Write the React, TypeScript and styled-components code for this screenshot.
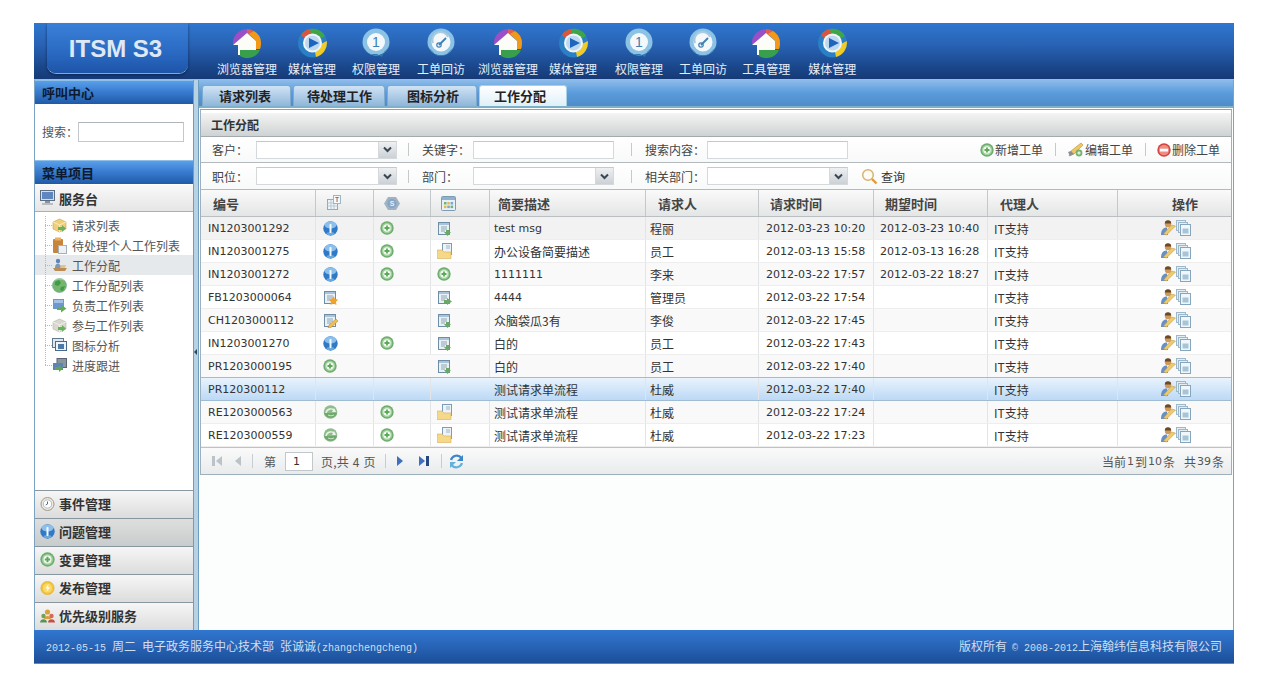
import React from "react";
import styled, { createGlobalStyle } from "styled-components";

const Global = createGlobalStyle`
  html, body { margin: 0; padding: 0; background: #fff; }
  body { font-family: "Noto Sans CJK SC", "Noto Sans", sans-serif; font-size: 12px; color: #333; }
`;

const Page = styled.div`
  width: 1280px; height: 700px; padding: 23px 0 0 34px; box-sizing: border-box; overflow: hidden;
`;
const Shell = styled.div`
  width: 1200px; height: 641px; display: flex; flex-direction: column;
`;
const Header = styled.header`
  height: 57px; flex: none; display: flex; align-items: flex-start; box-sizing: border-box;
  background: linear-gradient(#2f77d0 0%, #2862b3 40%, #1a4689 80%, #163a76 100%);
  border-bottom: 1px solid #8fc0e6;
`;
const Logo = styled.div`
  width: 141px; height: 50px; margin-left: 13px; flex: none; box-sizing: border-box;
  display: flex; align-items: center; justify-content: center; padding: 1px 4px 0 0;
  font: bold 24px "Liberation Sans", Arial, sans-serif; color: #dfe9f5;
  background: linear-gradient(#3a80d8 0%, #2a69c2 60%, #1d55a8 100%);
  border-radius: 0 0 9px 9px;
  box-shadow: 0 1px 0 #7ea9da, 0 2px 3px rgba(5, 25, 70, .7);
`;
const Nav = styled.nav`
  display: flex; margin-left: 29px; align-items: flex-start;
`;
const NavItem = styled.a<{ $gap: number }>`
  display: flex; flex-direction: column; align-items: center; margin-right: ${p => p.$gap}px;
  color: #e6eff9; font-size: 12px; line-height: 14px; padding-top: 5px;
  svg { display: block; margin-bottom: 4px; }
`;
const Body = styled.div`
  flex: 1; min-height: 0; display: flex; background: #fcfefe;
  border-left: 1px solid #7ca4c2; border-right: 1px solid #7ca4c2; box-sizing: border-box;
`;
const Sidebar = styled.aside`
  width: 158px; flex: none; display: flex; flex-direction: column; background: #fff; box-sizing: border-box;
`;
const PaneHead = styled.div`
  height: 24px; flex: none; padding: 0 0 1px 7px; display: flex; align-items: center; box-sizing: border-box;
  font-weight: 700; color: #0b1a30; font-size: 13px;
  background: linear-gradient(#5a9fec 0%, #3a7dd0 45%, #1f5aa8 100%);
  border-top: 1px solid #8fc0e6;
`;
const SearchBox = styled.div`
  height: 56px; flex: none; display: flex; align-items: center; padding: 0 0 1px 7px; color: #555; box-sizing: border-box;
`;
const SearchInput = styled.div`
  width: 106px; height: 20px; box-sizing: border-box;
  border: 1px solid #c4c8cc; border-top-color: #aeb4b8; background: #fff;
`;
const GroupHead = styled.div`
  height: 28px; flex: none; display: flex; align-items: center; gap: 4px; padding-left: 5px; box-sizing: border-box;
  font-weight: 700; font-size: 13px; color: #333;
  background: linear-gradient(#f8f8f8, #e6e6e6);
  border-bottom: 1px solid #a7b0b6; border-top: 1px solid #fff;
`;
const Tree = styled.ul`
  flex: 1; margin: 0; padding: 3px 0 0; list-style: none;
`;
const TreeRow = styled.li<{ $active?: boolean; $last?: boolean }>`
  height: 20px; display: flex; align-items: center; color: #555; font-size: 12px; padding-left: 17px;
  gap: 5px; box-sizing: border-box;
  background-color: ${p => (p.$active ? "#e6e9ec" : "transparent")};
  background-image: repeating-linear-gradient(0deg, #b8b8b8 0 1px, transparent 1px 2px),
    repeating-linear-gradient(90deg, #b8b8b8 0 1px, transparent 1px 2px);
  background-repeat: no-repeat;
  background-size: 1px ${p => (p.$last ? "10px" : "100%")}, 7px 1px;
  background-position: 10px 0, 10px 10px;
  svg { flex: none; width: 15px; }
`;
const Accordion = styled.div<{ $active?: boolean }>`
  height: 28px; flex: none; display: flex; align-items: center; gap: 4px; padding: 0 0 2px 5px; box-sizing: border-box;
  font-weight: 700; font-size: 13px; color: #333;
  border-top: 1px solid #87969f;
  background: ${p => (p.$active ? "linear-gradient(#dedede, #c9cccc)" : "linear-gradient(#f6f6f6, #dcdcdc)")};
  svg { flex: none; width: 15px; }
`;
const Splitter = styled.div`
  width: 6px; flex: none; display: flex; align-items: center; box-sizing: border-box; padding-bottom: 6px;
  background: #b7d2e4; border-left: 1px solid #6f9dbd; border-right: 1px solid #6f9dbd;
  &::before { content: ""; border: 3px solid transparent; border-right-color: #345; border-left: 0; }
`;
const Main = styled.main`
  flex: 1; min-width: 0; display: flex; flex-direction: column; box-sizing: border-box;
`;
const TabBar = styled.div`
  height: 28px; flex: none; display: flex; align-items: flex-end; gap: 2px; padding-left: 3px; box-sizing: border-box;
  background: linear-gradient(#8dbcea 0%, #5a9bdc 50%, #4f8cc8 100%);
  border-bottom: 2px solid #7fb0c9;
`;
const Tab = styled.div<{ $w: number; $pad: number; $active?: boolean }>`
  width: ${p => p.$w}px; height: 21px; display: flex; align-items: center; box-sizing: border-box;
  font-weight: 700; font-size: 13px; color: #222; padding: 0 0 2px ${p => p.$pad - 1}px;
  border-radius: 3px 3px 0 0;
  border: 1px solid ${p => (p.$active ? "#a9d0e4" : "#7eaad0")}; border-bottom: 0;
  background: ${p => (p.$active ? "linear-gradient(#ffffff, #dff0f8)" : "linear-gradient(#d0e3f4, #8fb6da)")};
`;
const Panel = styled.section`
  margin: 1px 1px 0 1px; border: 1px solid #9db0bb; border-top-color: #8aa3ac; display: flex; flex-direction: column; background: #fff;
`;
const PanelTitle = styled.div`
  height: 27px; flex: none; display: flex; align-items: center; padding: 0 0 1px 10px; box-sizing: border-box;
  border-top: 3px solid #fff; font-weight: 700; font-size: 12px; color: #333;
  background: linear-gradient(#f4f4f4, #cfd2d3); background-clip: padding-box;
  border-bottom: 1px solid #a3abae;
`;
const Toolbar = styled.div<{ $h: number }>`
  height: ${p => p.$h}px; flex: none; display: flex; align-items: center; padding: 0 11px; box-sizing: border-box;
  border-bottom: 1px solid #b3b9bc; color: #444; font-size: 12px;
  background: linear-gradient(#ffffff, #f8f9f9);
`;
const FieldLabel = styled.span<{ $w: number }>`
  width: ${p => p.$w}px; flex: none;
`;
const Input = styled.div`
  width: 141px; height: 18px; flex: none; display: flex; justify-content: flex-end; box-sizing: border-box;
  border: 1px solid #d6d9db; border-top-color: #c5c9cc; background: #fff;
`;
const ComboButton = styled.span`
  width: 17px; display: flex; align-items: center; justify-content: center;
  background: linear-gradient(#eef0f2, #ccd1d6); border-left: 1px solid #d6d9db;
`;
const Sep = styled.i<{ $l: number; $r: number }>`
  width: 1px; height: 13px; flex: none; background: #c5c9cc; margin: 0 ${p => p.$r}px 0 ${p => p.$l}px;
`;
const Actions = styled.div`
  margin-left: auto; display: flex; align-items: center; color: #444;
`;
const Action = styled.span`
  display: flex; align-items: center; gap: 1px;
`;
const QueryBtn = styled.span`
  display: flex; align-items: center; gap: 3px; margin-left: 13px; color: #333;
`;
const Grid = styled.div`
  display: grid; grid-template-columns: 115px 58px 57px 59px 156px 113px 115px 114px 130px 115px;
`;
const HeadRow = styled(Grid)`
  height: 27px; box-sizing: border-box; background: linear-gradient(#fafafa, #e4e5e5); border-bottom: 1px solid #b9bfc2;
`;
const HeadCell = styled.div<{ $pad?: number }>`
  display: flex; align-items: center; box-sizing: border-box; font-weight: 700; font-size: 13px; color: #444;
  padding-left: ${p => p.$pad ?? 12}px;
  border-right: 1px solid #c3c8ca;
  &:last-child { border-right: 0; }
`;
const Row = styled(Grid)<{ $tone: "first" | "odd" | "even" | "selected" }>`
  height: 23px; box-sizing: border-box; border-bottom: 1px solid ${p => (p.$tone === "selected" ? "#9fbcd2" : "#eeeeee")};
  background: ${p =>
    p.$tone === "first" ? "#f2f2f2" :
    p.$tone === "even" ? "#f9f9f9" :
    p.$tone === "selected" ? "linear-gradient(#e9f3fc, #bcd9f6)" : "#ffffff"};
  ${p => p.$tone === "selected" ? "margin-top: -1px; height: 24px; border-top: 1px solid #9fbcd2;" : ""}
`;
const Cell = styled.div<{ $pad?: number; $center?: boolean; $noline?: boolean; $latin?: boolean }>`
  display: flex; align-items: center; box-sizing: border-box; overflow: hidden; white-space: nowrap;
  justify-content: ${p => (p.$center ? "center" : "flex-start")};
  padding-left: ${p => (p.$center ? 0 : p.$pad ?? 7)}px; color: #333;
  font-size: ${p => (p.$latin ? "11px" : "12px")};
  font-family: ${p => (p.$latin ? '"DejaVu Sans", sans-serif' : 'inherit')};
  border-right: 1px solid ${p => (p.$noline ? "transparent" : "#e2e4e5")};
  &:last-child { border-right: 0; }
`;
const Pager = styled.div`
  height: 27px; flex: none; display: flex; align-items: center; padding: 0 7px 0 10px; box-sizing: border-box;
  color: #555; font-size: 12px; background: linear-gradient(#fafafa, #e9ebec);
  border-top: 1px solid #bcc2c5;
`;
const PagerSep = styled.i<{ $l: number; $r: number }>`
  width: 1px; height: 14px; background: #c9cdd0; flex: none; margin: 0 ${p => p.$r}px 0 ${p => p.$l}px;
`;
const PageInput = styled.span`
  width: 28px; height: 19px; margin: 0 8px 0 9px; display: flex; align-items: center; padding-left: 7px; box-sizing: border-box;
  border: 1px solid #c2c7ca; background: #fff; color: #333; font: 11px "DejaVu Sans", sans-serif;
`;
const PageTotal = styled.span` width: 55px; flex: none; word-spacing: 1px; letter-spacing: .2px; white-space: nowrap; `;
const PagerGap = styled.span<{ $w: number }>` width: ${p => p.$w}px; flex: none; `;
const PageInfo = styled.span` margin-left: auto; display: flex; align-items: center; `;
const Digits = styled.span` font: 11px "DejaVu Sans", sans-serif; margin: 0 1px; `;
const Num = styled.span`
  font: 10px "Liberation Mono", monospace;
`;
const Footer = styled.footer`
  height: 34px; flex: none; display: flex; align-items: center; justify-content: space-between; padding: 0 12px 2px 12px; box-sizing: border-box;
  color: #cfdff0; font-size: 12px;
  background: linear-gradient(#2f77d0 0%, #2863b6 50%, #1b4f98 100%);
  border-bottom: 1px solid #5f8ab5;
`;
const Space = styled.span<{ $w?: number }>` display: inline-block; width: ${p => p.$w ?? 6}px; `;

type P = { s?: number };
const Pinwheel = () => (
  <svg width="30" height="30" viewBox="0 0 30 30">
    <path d="M15 1 A14 14 0 0 0 1 16 H5 L15 6Z" fill="#9a4fc6" />
    <path d="M15 1 A14 14 0 0 1 22 3 L18 8 L15 5Z" fill="#dc5f57" />
    <path d="M22 3 A14 14 0 0 1 29 16 A14 14 0 0 1 28 21 H24 V13 L17 6Z" fill="#f29a18" />
    <path d="M7 22 H28 A14 14 0 0 1 8 28Z" fill="#38a04c" />
    <path d="M15 5 L1 17 H6 V27 H8 V22 H24 V13Z" fill="#fdfdf8" />
  </svg>
);
const Media = () => (
  <svg width="31" height="30" viewBox="0 0 31 30">
    <circle cx="15.5" cy="15" r="14.5" fill="#2b7fc4" />
    <path d="M5 5 A14.5 14.5 0 0 1 28 8 L23 11 A9 9 0 0 0 9 10Z" fill="#3fa648" />
    <path d="M4 7 A14.5 14.5 0 0 1 13 1 L14 6 A9 9 0 0 0 8 11Z" fill="#d9553f" />
    <path d="M29.8 13 A14.5 14.5 0 0 1 19 29 L18 24 A9 9 0 0 0 24 16Z" fill="#f1cb26" />
    <circle cx="15.5" cy="15" r="9.5" fill="#eef5fb" />
    <circle cx="15.5" cy="15" r="7.5" fill="#bcd9f0" />
    <path d="M12 10 L22 15 L12 20Z" fill="#1e66bd" />
  </svg>
);
const NumIcon = () => (
  <svg width="28" height="30" viewBox="0 0 28 30">
    <circle cx="14" cy="14" r="13.5" fill="#8cc2e4" />
    <path d="M2 20 A13.5 13.5 0 0 0 26 20 L22 24 L20 29 L15 26 H7Z" fill="#2f79ae" />
    <circle cx="14" cy="14" r="9" fill="#f4f8fb" />
    <text x="14" y="19" textAnchor="middle" fontSize="14" fontFamily="Liberation Sans" fill="#3f7fb0">1</text>
  </svg>
);
const Gauge = () => (
  <svg width="28" height="30" viewBox="0 0 28 30">
    <circle cx="14" cy="14" r="13.5" fill="#8cc2e4" />
    <path d="M2 20 A13.5 13.5 0 0 0 26 20 L22 24 L17 28 H10 L6 24Z" fill="#2f79ae" />
    <circle cx="14" cy="14" r="9.5" fill="#f4f8fb" />
    <path d="M6 15 A8 8 0 0 1 21 9" fill="none" stroke="#a9cbe2" strokeWidth="2" />
    <path d="M12 17 L19 10" stroke="#3f7fb0" strokeWidth="1.8" />
    <circle cx="12" cy="17" r="2.2" fill="none" stroke="#3f7fb0" strokeWidth="1.2" />
  </svg>
);
const Info = ({ s = 15 }: P) => (
  <svg width={s} height={s} viewBox="0 0 15 15">
    <circle cx="7.5" cy="7.5" r="7.2" fill="#2f79c6" />
    <ellipse cx="7.5" cy="4" rx="6" ry="3.4" fill="#8cc0ec" />
    <ellipse cx="7.5" cy="12.5" rx="4" ry="1.6" fill="#6aa9e0" />
    <rect x="6.5" y="3" width="2" height="9" rx=".8" fill="#f4f9fd" />
  </svg>
);
const Plus = ({ s = 14 }: P) => (
  <svg width={s} height={s} viewBox="0 0 14 14">
    <circle cx="7" cy="7" r="6.7" fill="#6eac6e" />
    <circle cx="7" cy="7" r="5.2" fill="#9dd09a" />
    <circle cx="7" cy="7" r="3.7" fill="#f2faf1" />
    <path d="M7 4.5 V9.5 M4.5 7 H9.5" stroke="#5fa75d" strokeWidth="1.8" />
  </svg>
);
const Minus = () => (
  <svg width="14" height="14" viewBox="0 0 14 14">
    <circle cx="7" cy="7" r="6.7" fill="#d3433f" />
    <circle cx="7" cy="7" r="5.2" fill="#ef8c84" />
    <rect x="3" y="5.7" width="8" height="2.8" fill="#fff" />
  </svg>
);
const DocBase = () => (
  <>
    <rect x="1.5" y="1.5" width="11" height="12" fill="#eaf1f6" stroke="#6e8da6" />
    <rect x="2" y="2" width="10" height="2" fill="#a9c3d8" />
    <path d="M4 6 H10 M4 8 H10 M4 10 H8" stroke="#8ea3b3" />
  </>
);
const DocDown = () => (
  <svg width="15" height="15" viewBox="0 0 15 15">
    <DocBase />
    <path d="M9 9 H12 V11 H14 L10.5 15 L7 11 H9Z" fill="#69a866" />
  </svg>
);
const DocRight = () => (
  <svg width="15" height="15" viewBox="0 0 15 15">
    <DocBase />
    <path d="M7 10 H10 V8 L15 11.5 L10 15 V13 H7Z" fill="#69a866" />
  </svg>
);
const DocStar = () => (
  <svg width="15" height="15" viewBox="0 0 15 15">
    <DocBase />
    <path d="M10.5 6 L12 9 L15 9.5 L13 12 L13.5 15 L10.5 13.6 L7.5 15 L8 12 L6 9.5 L9 9Z" fill="#f0a32a" />
  </svg>
);
const DocEdit = () => (
  <svg width="15" height="15" viewBox="0 0 15 15">
    <DocBase />
    <path d="M13 6 L15 8 L8 14.5 L5 15 L6 12Z" fill="#efbf55" stroke="#b97c2c" strokeWidth=".5" />
  </svg>
);
const FolderDoc = () => (
  <svg width="15" height="16" viewBox="0 0 15 16">
    <rect x="5.5" y="0.5" width="9" height="11" fill="#eef3f8" stroke="#7d9cb8" />
    <path d="M9 3 H13 M9 5 H13" stroke="#9ab4c9" />
    <path d="M0 7 H5 L7 9 H14 V15.5 H0Z" fill="#f6d988" stroke="#d6ae58" strokeWidth=".6" />
  </svg>
);
const Refresh = () => (
  <svg width="15" height="14" viewBox="0 0 15 14">
    <circle cx="7.5" cy="7" r="6.8" fill="#8fbc8c" />
    <path d="M1 8 A6.8 6.8 0 0 0 14 8Z" fill="#6fa96c" />
    <path d="M3 8 A5 5 0 0 1 12 6" fill="none" stroke="#e9f4e6" strokeWidth="1.4" />
    <path d="M11 3 L13 7 L9 7Z" fill="#e9f4e6" />
    <path d="M5 10 A5 4 0 0 0 11 10" fill="none" stroke="#cfe6cb" />
  </svg>
);
const UserPen = () => (
  <svg width="16" height="16" viewBox="0 0 16 16">
    <circle cx="8" cy="4" r="3.2" fill="#d29a58" />
    <path d="M4.8 3.5 A3.2 3.2 0 0 1 11.2 3.5Z" fill="#6b4a28" />
    <path d="M1 15 C1 9 4 7.5 7 7.5 L8 15Z" fill="#6a8fc2" />
    <path d="M15.5 6 L6.5 15 L3.5 14 L11.5 5Z" fill="#eccb6c" stroke="#b99344" strokeWidth=".5" />
  </svg>
);
const Copies = () => (
  <svg width="15" height="16" viewBox="0 0 15 16">
    <rect x="0.5" y="0.5" width="9" height="10" fill="#e3edf4" stroke="#9db8cb" />
    <rect x="2.5" y="2.5" width="9" height="10" fill="#e3edf4" stroke="#9db8cb" />
    <rect x="4.5" y="4.5" width="10" height="11" fill="#f1f6fa" stroke="#86a6bd" />
    <rect x="6.5" y="8.5" width="6" height="5" fill="#a8c5d8" />
  </svg>
);
const Pencil = () => (
  <svg width="17" height="15" viewBox="0 0 17 15">
    <path d="M14 1 L16 3 L7 12 L2 14 L4 9Z" fill="#f0c562" stroke="#b98f35" strokeWidth=".6" />
    <path d="M1 10 L4 9 L7 12 L3 14Z" fill="#8a8f96" />
    <circle cx="12" cy="11" r="3.4" fill="#74b26f" />
    <path d="M12 9.3 V12.7 M10.3 11 H13.7" stroke="#fff" />
  </svg>
);
const Magnifier = () => (
  <svg width="17" height="17" viewBox="0 0 17 17">
    <circle cx="7" cy="7" r="5.3" fill="#fdfbf4" stroke="#d9b370" strokeWidth="1.5" />
    <path d="M11 11 L15.5 15.5" stroke="#e39a3b" strokeWidth="2.4" />
  </svg>
);
const Chevron = () => (
  <svg width="9" height="7" viewBox="0 0 9 7">
    <path d="M1 1.5 L4.5 5 L8 1.5" fill="none" stroke="#3a4650" strokeWidth="2" />
  </svg>
);
const Monitor = () => (
  <svg width="15" height="16" viewBox="0 0 15 16">
    <rect x="0.5" y="0.5" width="14" height="10" fill="#d7dde3" stroke="#5f6f82" />
    <rect x="2" y="2" width="11" height="7" fill="#5f86bf" />
    <rect x="5" y="11" width="5" height="2" fill="#8b949c" />
    <rect x="2" y="13" width="11" height="2" fill="#b7bdc2" />
  </svg>
);
const BoxArrow = ({ gray }: { gray?: boolean }) => (
  <svg width="15" height="15" viewBox="0 0 15 15">
    <path d="M1 4 L7.5 1 L14 4 L14 11 L7.5 14 L1 11Z" fill={gray ? "#d8d8cf" : "#f0cf7a"} stroke={gray ? "#b5b5a8" : "#c9a24e"} strokeWidth=".6" />
    <path d="M1 4 L7.5 7 L14 4 M7.5 7 V14" stroke={gray ? "#f0f0ea" : "#fbeab8"} fill="none" />
    <path d="M6 9 H10 V7 L14 10.5 L10 14 V12 H6Z" fill="#6bb060" />
  </svg>
);
const Clipboard = () => (
  <svg width="15" height="17" viewBox="0 0 15 17">
    <rect x="1" y="2" width="10" height="14" rx="1" fill="#c8843a" />
    <rect x="3" y="0.5" width="6" height="3" fill="#e7b066" />
    <rect x="6.5" y="8.5" width="8" height="8" fill="#eef1f3" stroke="#a7b0b8" />
  </svg>
);
const Workers = () => (
  <svg width="15" height="15" viewBox="0 0 15 15">
    <circle cx="6" cy="3" r="2.2" fill="#5f86b5" />
    <path d="M3 10 C3 6 5 5.5 7 5.5 L10 10Z" fill="#7f98b5" />
    <path d="M1 10 H15 L13 13 H3Z" fill="#b98d55" />
    <path d="M9 7 H14 L13 10 H8Z" fill="#e0c58a" />
  </svg>
);
const GlobeIcon = () => (
  <svg width="15" height="15" viewBox="0 0 15 15">
    <circle cx="7.5" cy="7.5" r="7" fill="#73b66c" stroke="#6f9d92" strokeWidth=".6" />
    <path d="M3 4 L7 2 L9 5 L6 8 L3 7Z M9 9 L13 8 L11 13 L8 12Z" fill="#3f9a4a" />
    <path d="M2 3 A7 7 0 0 1 13 3 A9 6 0 0 0 2 3Z" fill="#bfe0c5" opacity=".7" />
  </svg>
);
const ScreenArrow = () => (
  <svg width="15" height="15" viewBox="0 0 15 15">
    <rect x="1" y="1" width="11" height="10" fill="#6d97d0" />
    <rect x="2" y="2" width="9" height="3" fill="#a3c2e6" />
    <path d="M5 9 H9 V7 L14.5 10.5 L9 14.5 V12 H5Z" fill="#63ab55" />
  </svg>
);
const Stack = () => (
  <svg width="15" height="15" viewBox="0 0 15 15">
    <rect x="0.5" y="0.5" width="11" height="9" fill="#dce7ef" stroke="#62788d" />
    <rect x="3.5" y="3.5" width="11" height="9" fill="#eef3f7" stroke="#476a8c" />
    <rect x="6" y="6" width="6" height="5" fill="#4d79a8" />
  </svg>
);
const Machine = () => (
  <svg width="15" height="15" viewBox="0 0 15 15">
    <rect x="5" y="0.5" width="9.5" height="9" fill="#8a97a1" stroke="#5a6670" />
    <rect x="1" y="5" width="10" height="7" fill="#5d87b0" />
    <path d="M3 9 H7 V7 L11 10.5 L7 14 V12 H3Z" fill="#61a650" />
  </svg>
);
const Clock = () => (
  <svg width="15" height="14" viewBox="0 0 14 14">
    <circle cx="7" cy="7" r="6.5" fill="#eeeae0" stroke="#a39a85" />
    <circle cx="7" cy="7" r="4.2" fill="#fff" stroke="#aebccb" />
    <path d="M7 4.5 V7 L5.2 8" stroke="#5a6b7c" fill="none" />
  </svg>
);
const Bolt = () => (
  <svg width="15" height="14" viewBox="0 0 14 14">
    <circle cx="7" cy="7" r="6.6" fill="#f4c53c" stroke="#d9a526" strokeWidth=".6" />
    <circle cx="7" cy="7" r="4.5" fill="#fbd968" />
    <path d="M8 3 L5 7.5 H7 L6 11 L9.5 6.3 H7.5Z" fill="#fff" />
  </svg>
);
const People = () => (
  <svg width="15" height="14" viewBox="0 0 15 14">
    <circle cx="7.5" cy="3" r="2.6" fill="#d9a13e" />
    <path d="M4 10 C4 6 11 6 11 10Z" fill="#d9a13e" />
    <circle cx="3.5" cy="7" r="2.2" fill="#6fa35c" />
    <path d="M0 13.5 C0 9 7 9 7 13.5Z" fill="#5a9356" />
    <circle cx="11.5" cy="7" r="2.2" fill="#d9665a" />
    <path d="M8 13.5 C8 9 15 9 15 13.5Z" fill="#c54e48" />
  </svg>
);
const ColIconA = () => (
  <svg width="16" height="16" viewBox="0 0 16 16">
    <rect x="1.5" y="4.5" width="10" height="10" fill="#eef3f7" stroke="#8ea9bc" />
    <path d="M1.5 8 H11.5 M1.5 11 H11.5 M5 4.5 V14.5 M8 4.5 V14.5" stroke="#b7c9d6" />
    <rect x="7.5" y="0.5" width="7" height="8" fill="#f7fafc" stroke="#9db5c6" />
    <text x="11" y="7" textAnchor="middle" fontSize="6.5" fontFamily="Liberation Sans" fill="#5d7a90">T</text>
  </svg>
);
const ColIconB = () => (
  <svg width="16" height="15" viewBox="0 0 16 15">
    <path d="M4 1 H12 L16 7.5 L12 14 H4 L0 7.5Z" fill="#9fb3c4" />
    <circle cx="8" cy="7.5" r="4.6" fill="#86a6c4" />
    <text x="8" y="10" textAnchor="middle" fontSize="7" fontFamily="Liberation Sans" fill="#e8f0f5">S</text>
  </svg>
);
const ColIconC = () => (
  <svg width="15" height="15" viewBox="0 0 15 15">
    <rect x="0.5" y="0.5" width="14" height="14" rx="1" fill="#e7f0f6" stroke="#7d9bb3" />
    <rect x="1" y="1" width="13" height="3" fill="#8fb1cc" />
    <rect x="3" y="6" width="2.5" height="2.5" fill="#7ab06e" />
    <rect x="6.3" y="6" width="2.5" height="2.5" fill="#e5b94b" />
    <rect x="9.6" y="6" width="2.5" height="2.5" fill="#7fa6cd" />
    <rect x="3" y="9.6" width="2.5" height="2.5" fill="#e5b94b" />
    <rect x="6.3" y="9.6" width="2.5" height="2.5" fill="#7fa6cd" />
    <rect x="9.6" y="9.6" width="2.5" height="2.5" fill="#7ab06e" />
  </svg>
);
const PagerFirst = () => (
  <svg width="12" height="12" viewBox="0 0 12 12">
    <rect x="1" y="1" width="3" height="10" fill="#bcc3c8" />
    <path d="M11 1 V11 L5 6Z" fill="#bcc3c8" />
  </svg>
);
const PagerPrev = () => (
  <svg width="10" height="12" viewBox="0 0 10 12">
    <path d="M8 1 V11 L2 6Z" fill="#bcc3c8" />
  </svg>
);
const PagerNext = () => (
  <svg width="10" height="12" viewBox="0 0 10 12">
    <path d="M2 1 V11 L8 6Z" fill="#3f6fc0" />
  </svg>
);
const PagerLast = () => (
  <svg width="12" height="12" viewBox="0 0 12 12">
    <path d="M1 1 V11 L7 6Z" fill="#3f6fc0" />
    <rect x="8" y="1" width="3" height="10" fill="#26477f" />
  </svg>
);
const PagerRefresh = () => (
  <svg width="15" height="15" viewBox="0 0 15 15">
    <path d="M2 6 A6 6 0 0 1 12.5 4" fill="none" stroke="#3b87c9" strokeWidth="2.2" />
    <path d="M14 1 V7 H8Z" fill="#3b87c9" />
    <path d="M13 9 A6 6 0 0 1 2.5 11" fill="none" stroke="#62b0dc" strokeWidth="2.2" />
    <path d="M1 14 V8 H7Z" fill="#62b0dc" />
  </svg>
);

const navItems: [string, React.ReactNode, number][] = [
  ["浏览器管理", <Pinwheel />, 11],
  ["媒体管理", <Media />, 16],
  ["权限管理", <NumIcon />, 17],
  ["工单回访", <Gauge />, 13],
  ["浏览器管理", <Pinwheel />, 11],
  ["媒体管理", <Media />, 18],
  ["权限管理", <NumIcon />, 16],
  ["工单回访", <Gauge />, 15],
  ["工具管理", <Pinwheel />, 18],
  ["媒体管理", <Media />, 0],
];

const treeItems: [string, React.ReactNode][] = [
  ["请求列表", <BoxArrow />],
  ["待处理个人工作列表", <Clipboard />],
  ["工作分配", <Workers />],
  ["工作分配列表", <GlobeIcon />],
  ["负责工作列表", <ScreenArrow />],
  ["参与工作列表", <BoxArrow gray />],
  ["图标分析", <Stack />],
  ["进度跟进", <Machine />],
];

const accordions: [string, React.ReactNode][] = [
  ["事件管理", <Clock />],
  ["问题管理", <Info />],
  ["变更管理", <Plus s={15} />],
  ["发布管理", <Bolt />],
  ["优先级别服务", <People />],
];

type RowData = {
  id: string; a?: React.ReactNode; b?: React.ReactNode; c?: React.ReactNode;
  desc: string; who: string; t1: string; t2?: string;
};

const rows: RowData[] = [
  { id: "IN1203001292", a: <Info />, b: <Plus />, c: <DocDown />, desc: "test msg", who: "程丽", t1: "2012-03-23 10:20", t2: "2012-03-23 10:40" },
  { id: "IN1203001275", a: <Info />, b: <Plus />, c: <FolderDoc />, desc: "办公设备简要描述", who: "员工", t1: "2012-03-13 15:58", t2: "2012-03-13 16:28" },
  { id: "IN1203001272", a: <Info />, b: <Plus />, c: <Plus />, desc: "1111111", who: "李来", t1: "2012-03-22 17:57", t2: "2012-03-22 18:27" },
  { id: "FB1203000064", a: <DocStar />, c: <DocRight />, desc: "4444", who: "管理员", t1: "2012-03-22 17:54" },
  { id: "CH1203000112", a: <DocEdit />, c: <DocDown />, desc: "众脑袋瓜3有", who: "李俊", t1: "2012-03-22 17:45" },
  { id: "IN1203001270", a: <Info />, b: <Plus />, c: <DocDown />, desc: "白的", who: "员工", t1: "2012-03-22 17:43" },
  { id: "PR1203000195", a: <Plus />, c: <DocDown />, desc: "白的", who: "员工", t1: "2012-03-22 17:40" },
  { id: "PR120300112", desc: "测试请求单流程", who: "杜威", t1: "2012-03-22 17:40" },
  { id: "RE1203000563", a: <Refresh />, b: <Plus />, c: <FolderDoc />, desc: "测试请求单流程", who: "杜威", t1: "2012-03-22 17:24" },
  { id: "RE1203000559", a: <Refresh />, b: <Plus />, c: <FolderDoc />, desc: "测试请求单流程", who: "杜威", t1: "2012-03-22 17:23" },
];

const toneOf = (i: number): "first" | "odd" | "even" | "selected" =>
  i === 0 ? "first" : i === 7 ? "selected" : i % 2 === 1 ? "odd" : "even";

export default function App() {
  return (
    <Page>
      <Global />
      <Shell>
        <Header>
          <Logo>ITSM S3</Logo>
          <Nav>
            {navItems.map(([label, icon, gap], i) => (
              <NavItem key={i} $gap={gap}>{icon}{label}</NavItem>
            ))}
          </Nav>
        </Header>
        <Body>
          <Sidebar>
            <PaneHead>呼叫中心</PaneHead>
            <SearchBox>搜索：<SearchInput /></SearchBox>
            <PaneHead>菜单项目</PaneHead>
            <GroupHead><Monitor />服务台</GroupHead>
            <Tree>
              {treeItems.map(([label, icon], i) => (
                <TreeRow key={label} $active={i === 2} $last={i === treeItems.length - 1}>{icon}{label}</TreeRow>
              ))}
            </Tree>
            {accordions.map(([label, icon], i) => (
              <Accordion key={label} $active={i === 1}>{icon}{label}</Accordion>
            ))}
          </Sidebar>
          <Splitter />
          <Main>
            <TabBar>
              <Tab $w={89} $pad={17}>请求列表</Tab>
              <Tab $w={92} $pad={14}>待处理工作</Tab>
              <Tab $w={90} $pad={20}>图标分析</Tab>
              <Tab $w={88} $pad={15} $active>工作分配</Tab>
            </TabBar>
            <Panel>
              <PanelTitle>工作分配</PanelTitle>
              <Toolbar $h={26}>
                <FieldLabel $w={44}>客户：</FieldLabel>
                <Input><ComboButton><Chevron /></ComboButton></Input>
                <Sep $l={11} $r={13} />
                <FieldLabel $w={51}>关键字：</FieldLabel>
                <Input />
                <Sep $l={17} $r={13} />
                <FieldLabel $w={62}>搜索内容：</FieldLabel>
                <Input />
                <Actions>
                  <Action><Plus />新增工单</Action>
                  <Sep $l={12} $r={11} />
                  <Action><Pencil />编辑工单</Action>
                  <Sep $l={12} $r={11} />
                  <Action><Minus />删除工单</Action>
                </Actions>
              </Toolbar>
              <Toolbar $h={27}>
                <FieldLabel $w={44}>职位：</FieldLabel>
                <Input><ComboButton><Chevron /></ComboButton></Input>
                <Sep $l={11} $r={13} />
                <FieldLabel $w={51}>部门：</FieldLabel>
                <Input><ComboButton><Chevron /></ComboButton></Input>
                <Sep $l={17} $r={13} />
                <FieldLabel $w={62}>相关部门：</FieldLabel>
                <Input><ComboButton><Chevron /></ComboButton></Input>
                <QueryBtn><Magnifier />查询</QueryBtn>
              </Toolbar>
              <HeadRow>
                <HeadCell>编号</HeadCell>
                <HeadCell $pad={10}><ColIconA /></HeadCell>
                <HeadCell $pad={10}><ColIconB /></HeadCell>
                <HeadCell $pad={10}><ColIconC /></HeadCell>
                <HeadCell $pad={8}>简要描述</HeadCell>
                <HeadCell>请求人</HeadCell>
                <HeadCell $pad={11}>请求时间</HeadCell>
                <HeadCell $pad={11}>期望时间</HeadCell>
                <HeadCell>代理人</HeadCell>
                <HeadCell $pad={54}>操作</HeadCell>
              </HeadRow>
              {rows.map((r, i) => (
                <Row key={r.id} $tone={toneOf(i)}>
                  <Cell $latin>{r.id}</Cell>
                  <Cell>{r.a}</Cell>
                  <Cell $pad={6} $noline={i === 6}>{r.b}</Cell>
                  <Cell $pad={6} $noline={i === 7}>{r.c}</Cell>
                  <Cell $pad={4} $latin={i === 0 || i === 2 || i === 3}>{r.desc}</Cell>
                  <Cell $pad={4}>{r.who}</Cell>
                  <Cell $latin>{r.t1}</Cell>
                  <Cell $latin $pad={6}>{r.t2}</Cell>
                  <Cell $pad={6}>IT支持</Cell>
                  <Cell $center><UserPen /><Copies /></Cell>
                </Row>
              ))}
              <Pager>
                <PagerFirst />
                <PagerGap $w={10} />
                <PagerPrev />
                <PagerSep $l={9} $r={11} />
                第
                <PageInput>1</PageInput>
                <PageTotal>页,共 4 页</PageTotal>
                <PagerSep $l={9} $r={9} />
                <PagerNext />
                <PagerGap $w={13} />
                <PagerLast />
                <PagerSep $l={11} $r={7} />
                <PagerRefresh />
                <PageInfo>当前<Digits>1</Digits>到<Digits>10</Digits>条<Space $w={9} />共<Digits>39</Digits>条</PageInfo>
              </Pager>
            </Panel>
          </Main>
        </Body>
        <Footer>
          <span><Num>2012-05-15</Num><Space />周二<Space />电子政务服务中心技术部<Space />张诚诚<Num>(zhangchengcheng)</Num></span>
          <span>版权所有<Space $w={5} /><Num>©</Num><Space /><Num>2008-2012</Num>上海翰纬信息科技有限公司</span>
        </Footer>
      </Shell>
    </Page>
  );
}
